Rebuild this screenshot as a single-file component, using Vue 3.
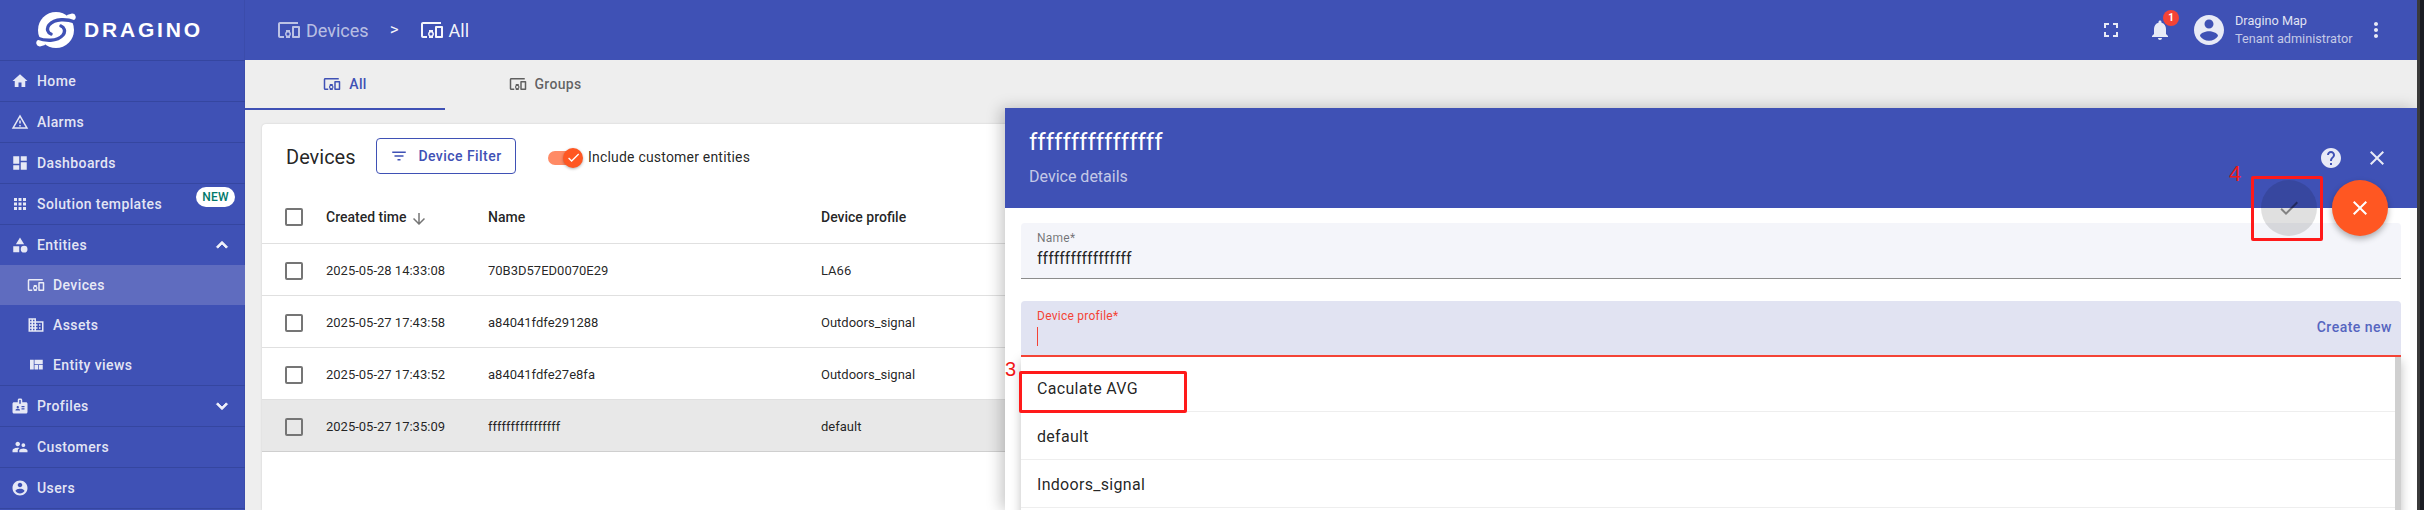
<script setup>
const I = {
  home: 'M10 20v-6h4v6h5v-8h3L12 3 2 12h3v8z',
  warn: 'M12 5.99L19.53 19H4.47L12 5.99M12 2L1 21h22L12 2zm1 14h-2v2h2v-2zm0-6h-2v4h2v-4z',
  dash: 'M3 13h8V3H3v10zm0 8h8v-6H3v6zm10 0h8V11h-8v10zm0-18v6h8V3h-8z',
  apps: 'M4 8h4V4H4v4zm6 12h4v-4h-4v4zm-6 0h4v-4H4v4zm0-6h4v-4H4v4zm6 0h4v-4h-4v4zm6-10v4h4V4h-4zm-6 4h4V4h-4v4zm6 6h4v-4h-4v4zm0 6h4v-4h-4v4z',
  cat: 'M12 2l-5.5 9h11zM17.5 13a4.5 4.5 0 1 0 0 9 4.5 4.5 0 0 0 0-9zM3 13.5h8v8H3z',
  dev: 'M3 6h18V4H3c-1.1 0-2 .9-2 2v12c0 1.1.9 2 2 2h4v-2H3V6zm10 6H9v1.78c-.61.55-1 1.33-1 2.22s.39 1.67 1 2.22V20h4v-1.78c.61-.55 1-1.34 1-2.22s-.39-1.67-1-2.22V12zm-2 5.5c-.83 0-1.5-.67-1.5-1.5s.67-1.5 1.5-1.5 1.5.67 1.5 1.5-.67 1.5-1.5 1.5zM22 8h-6c-.5 0-1 .5-1 1v10c0 .5.5 1 1 1h6c.5 0 1-.5 1-1V9c0-.5-.5-1-1-1zm-1 10h-4v-8h4v8z',
  domain: 'M12 7V3H2v18h20V7H12zM6 19H4v-2h2v2zm0-4H4v-2h2v2zm0-4H4V9h2v2zm0-4H4V5h2v2zm4 12H8v-2h2v2zm0-4H8v-2h2v2zm0-4H8V9h2v2zm0-4H8V5h2v2zm10 12h-8v-2h2v-2h-2v-2h2v-2h-2V9h8v10zm-2-8h-2v2h2v-2zm0 4h-2v2h2v-2z',
  quilt: 'M10 18h5v-6h-5v6zm-6 0h5V5H4v13zm12 0h5v-6h-5v6zM10 5v6h11V5H10z',
  badge: 'M20 7h-5V4c0-1.1-.9-2-2-2h-2c-1.1 0-2 .9-2 2v3H4c-1.1 0-2 .9-2 2v11c0 1.1.9 2 2 2h16c1.1 0 2-.9 2-2V9c0-1.1-.9-2-2-2zM9 12c.83 0 1.5.67 1.5 1.5S9.83 15 9 15s-1.5-.67-1.5-1.5S8.17 12 9 12zm3 6H6v-.75c0-1 2-1.5 3-1.5s3 .5 3 1.5V18zm1-9h-2V4h2v5zm5 7.5h-4V15h4v1.5zm0-3h-4V12h4v1.5z',
  sup: 'M16.5 12c1.38 0 2.49-1.12 2.49-2.5S17.88 7 16.5 7C15.12 7 14 8.12 14 9.5s1.12 2.5 2.5 2.5zM9 11c1.66 0 2.99-1.34 2.99-3S10.66 5 9 5C7.34 5 6 6.34 6 8s1.34 3 3 3zm7.5 3c-1.83 0-5.5.92-5.5 2.75V19h11v-2.25c0-1.83-3.67-2.75-5.5-2.75zM9 13c-2.33 0-7 1.17-7 3.5V19h7v-2.25c0-.85.33-2.34 2.37-3.47C10.5 13.1 9.66 13 9 13z',
  acct: 'M12 2C6.48 2 2 6.48 2 12s4.48 10 10 10 10-4.48 10-10S17.52 2 12 2zm0 3c1.66 0 3 1.34 3 3s-1.34 3-3 3-3-1.34-3-3 1.34-3 3-3zm0 14.2c-2.5 0-4.71-1.28-6-3.22.03-1.99 4-3.08 6-3.08 1.99 0 5.97 1.09 6 3.08-1.29 1.94-3.5 3.22-6 3.22z',
  less: 'M12 8l-6 6 1.41 1.41L12 10.83l4.59 4.58L18 14z',
  more: 'M16.59 8.59L12 13.17 7.41 8.59 6 10l6 6 6-6z',
  filter: 'M10 18h4v-2h-4v2zM3 6v2h18V6H3zm3 7h12v-2H6v2z',
  full: 'M7 14H5v5h5v-2H7v-3zm-2-4h2V7h3V5H5v5zm12 7h-3v2h5v-5h-2v3zM14 5v2h3v3h2V5h-5z',
  bell: 'M12 22c1.1 0 2-.9 2-2h-4c0 1.1.89 2 2 2zm6-6v-5c0-3.07-1.64-5.64-4.5-6.32V4c0-.83-.67-1.5-1.5-1.5s-1.5.67-1.5 1.5v.68C7.63 5.36 6 7.92 6 11v5l-2 2v1h16v-1l-2-2z',
  vert: 'M12 8c1.1 0 2-.9 2-2s-.9-2-2-2-2 .9-2 2 .9 2 2 2zm0 2c-1.1 0-2 .9-2 2s.9 2 2 2 2-.9 2-2-.9-2-2-2zm0 6c-1.1 0-2 .9-2 2s.9 2 2 2 2-.9 2-2-.9-2-2-2z',
  help: 'M12 2C6.48 2 2 6.48 2 12s4.48 10 10 10 10-4.48 10-10S17.52 2 12 2zm1 17h-2v-2h2v2zm2.07-7.75l-.9.92C13.45 12.9 13 13.5 13 15h-2v-.5c0-1.1.45-2.1 1.17-2.83l1.24-1.26c.37-.36.59-.86.59-1.41 0-1.1-.9-2-2-2s-2 .9-2 2H8c0-2.21 1.79-4 4-4s4 1.79 4 4c0 .88-.36 1.68-.93 2.25z',
  close: 'M19 6.41L17.59 5 12 10.59 6.41 5 5 6.41 10.59 12 5 17.59 6.41 19 12 13.41 17.59 19 19 17.59 13.41 12z',
  check: 'M9 16.17L4.83 12l-1.42 1.41L9 19 21 7l-1.41-1.41z',
  down: 'M20 12l-1.41-1.41L13 16.17V4h-2v12.17l-5.58-5.59L4 12l8 8 8-8z'
}
const nav = [
  { label: 'Home', icon: I.home },
  { label: 'Alarms', icon: I.warn },
  { label: 'Dashboards', icon: I.dash },
  { label: 'Solution templates', icon: I.apps, tag: 'NEW' },
  { label: 'Entities', icon: I.cat, chev: I.less, open: true },
  { label: 'Devices', icon: I.dev, sub: true, active: true },
  { label: 'Assets', icon: I.domain, sub: true },
  { label: 'Entity views', icon: I.quilt, sub: true, last: true },
  { label: 'Profiles', icon: I.badge, chev: I.more },
  { label: 'Customers', icon: I.sup },
  { label: 'Users', icon: I.acct }
]
const rows = [
  { t: '2025-05-28 14:33:08', n: '70B3D57ED0070E29', p: 'LA66' },
  { t: '2025-05-27 17:43:58', n: 'a84041fdfe291288', p: 'Outdoors_signal' },
  { t: '2025-05-27 17:43:52', n: 'a84041fdfe27e8fa', p: 'Outdoors_signal' },
  { t: '2025-05-27 17:35:09', n: 'ffffffffffffffff', p: 'default', sel: true }
]
const options = ['Caculate AVG', 'default', 'Indoors_signal']
</script>

<template>
  <div class="screen">
    <div class="app">
      <aside class="side">
        <div class="logo">
          <svg class="mark" viewBox="0 0 42 36">
            <circle cx="21" cy="18" r="18" fill="#fff" />
            <path d="M32 3L37 1.500A3.500 3.500 0 0 1 39 8L33 10z" fill="#fff" />
            <path d="M10 33L5 34.500A3.500 3.500 0 0 1 3 28L9 26z" fill="#fff" />
            <path d="M40 10C32 7 20 6 14 13C11 17 13 21 16 22" fill="none" stroke="#3f51b5" stroke-width="3.400" stroke-linecap="round" />
            <path d="M2 26C10 29 22 30 28 23C31 19 29 15 26 14" fill="none" stroke="#3f51b5" stroke-width="3.400" stroke-linecap="round" />
          </svg>
          <span class="word">DRAGINO</span>
        </div>
        <div
          v-for="n in nav"
          :key="n.label"
          class="nav"
          :class="{ sub: n.sub, active: n.active, open: n.open, last: n.last }"
        >
          <svg class="nav-ic" viewBox="0 0 24 24"><path :d="n.icon" /></svg>
          <span class="nav-t">{{ n.label }}</span>
          <span v-if="n.tag" class="tag">{{ n.tag }}</span>
          <svg v-if="n.chev" class="chev" viewBox="0 0 24 24"><path :d="n.chev" /></svg>
        </div>
      </aside>

      <div class="right">
        <header class="top">
          <div class="crumbs">
            <svg class="crumb-ic dim" viewBox="0 0 24 24"><path :d="I.dev" /></svg>
            <span class="dim">Devices</span>
            <span class="sep">&gt;</span>
            <svg class="crumb-ic" viewBox="0 0 24 24"><path :d="I.dev" /></svg>
            <span>All</span>
          </div>
          <div class="tools">
            <svg class="tool-full" viewBox="0 0 24 24"><path :d="I.full" /></svg>
            <div class="bell">
              <svg viewBox="0 0 24 24"><path :d="I.bell" /></svg>
              <span class="count">1</span>
            </div>
            <svg class="avatar" viewBox="2 2 20 20"><path :d="I.acct" /></svg>
            <div class="user">
              <div>Dragino Map</div>
              <div class="role">Tenant administrator</div>
            </div>
            <svg class="vert" viewBox="0 0 24 24"><path :d="I.vert" /></svg>
          </div>
        </header>

        <nav class="tabs">
          <div class="tab on">
            <svg viewBox="0 0 24 24"><path :d="I.dev" /></svg>
            <span>All</span>
          </div>
          <div class="tab">
            <svg viewBox="0 0 24 24"><path :d="I.dev" /></svg>
            <span>Groups</span>
          </div>
        </nav>

        <section class="card">
          <div class="bar">
            <h1>Devices</h1>
            <button class="filter">
              <svg viewBox="0 0 24 24"><path :d="I.filter" /></svg>
              <span>Device Filter</span>
            </button>
            <div class="toggle">
              <span class="thumb">
                <svg viewBox="0 0 24 24"><path :d="I.check" /></svg>
              </span>
            </div>
            <span class="inc">Include customer entities</span>
          </div>
          <div class="tr head">
            <span class="box"></span>
            <span class="created">Created time
              <svg viewBox="0 0 24 24"><path :d="I.down" /></svg>
            </span>
            <span>Name</span>
            <span>Device profile</span>
          </div>
          <div v-for="r in rows" :key="r.t" class="tr" :class="{ sel: r.sel }">
            <span class="box"></span>
            <span>{{ r.t }}</span>
            <span>{{ r.n }}</span>
            <span>{{ r.p }}</span>
          </div>
        </section>
      </div>

      <div class="panel">
        <div class="p-head">
          <div class="p-title">ffffffffffffffff</div>
          <div class="p-sub">Device details</div>
          <div class="p-actions">
            <svg viewBox="0 0 24 24"><path :d="I.help" /></svg>
            <svg viewBox="0 0 24 24"><path :d="I.close" /></svg>
          </div>
        </div>
        <div class="p-body">
          <div class="field">
            <label>Name*</label>
            <div class="val">fffffffffffffffff</div>
          </div>
          <div class="field focus">
            <label>Device profile*</label>
            <div class="val"><i class="caret"></i></div>
            <span class="create">Create new</span>
          </div>
          <div class="drop">
            <div v-for="o in options" :key="o" class="opt">{{ o }}</div>
            <div class="opt"></div>
          </div>
        </div>
        <button class="fab save">
          <svg viewBox="0 0 24 24"><path :d="I.check" /></svg>
        </button>
        <button class="fab cancel">
          <svg viewBox="0 0 24 24"><path :d="I.close" /></svg>
        </button>
      </div>

      <span class="note n3">3</span>
      <span class="mark-box b3"></span>
      <span class="note n4">4</span>
      <span class="mark-box b4"></span>
    </div>
    <div class="edge"></div>
  </div>
</template>

<style scoped>
.screen {
  display: flex;
  width: 2424px;
  height: 510px;
  overflow: hidden;
  font-family: Roboto, "Liberation Sans", sans-serif;
  color: rgba(0, 0, 0, 0.87);
}
.edge {
  width: 7px;
  flex: none;
  background: linear-gradient(90deg, #3a3a3a 0 3px, #1a1c22 3px);
}
.app {
  position: relative;
  flex: 1;
  display: flex;
  overflow: hidden;
  background: #eeeeee;
}
svg {
  display: block;
  fill: currentColor;
  flex: none;
}

/* sidebar */
.side {
  width: 245px;
  flex: none;
  background: #3f51b5;
  color: rgba(255, 255, 255, 0.87);
  box-shadow: inset -1px 0 0 rgba(0, 0, 0, 0.05);
}
.logo {
  height: 60px;
  border-bottom: 1px solid #3546a0;
  display: flex;
  align-items: center;
  padding-left: 35px;
  gap: 7px;
}
.mark {
  width: 42px;
  height: 36px;
}
.word {
  font-family: "Liberation Sans", sans-serif;
  font-weight: 700;
  font-size: 21px;
  letter-spacing: 2.800px;
  color: #fff;
}
.nav {
  height: 40px;
  border-bottom: 1px solid #3546a0;
  display: flex;
  align-items: center;
  padding-left: 11px;
  font-size: 14px;
  font-weight: 500;
  letter-spacing: 0.4px;
  position: relative;
  color: rgba(255, 255, 255, 0.87);
}
.nav-ic {
  width: 18px;
  height: 18px;
  margin-right: 8px;
}
.nav-t {
  margin-top: -1px;
}
.nav.sub,
.nav.open {
  border-bottom: 0;
}
.nav.sub {
  padding-left: 27px;
}
.nav.last {
  border-bottom: 1px solid #3546a0;
}
.nav.active {
  background: #5f6cbf;
}
.tag {
  position: absolute;
  left: 196px;
  top: 3px;
  width: 39px;
  height: 20px;
  border-radius: 10px;
  background: #fff;
  color: #00796b;
  font-size: 12px;
  line-height: 20px;
  text-align: center;
  letter-spacing: 0.2px;
}
.chev {
  width: 22px;
  height: 22px;
  position: absolute;
  left: 211px;
  top: 9px;
  color: #f0f1fa;
  stroke: currentColor;
  stroke-width: 1;
}

/* right column */
.right {
  flex: 1;
  min-width: 0;
  display: flex;
  flex-direction: column;
}
.top {
  height: 60px;
  flex: none;
  background: #3f51b5;
  color: #fff;
  display: flex;
  align-items: center;
  justify-content: space-between;
  padding-left: 32px;
}
.crumbs {
  display: flex;
  align-items: center;
  font-size: 18px;
  color: rgba(255, 255, 255, 0.95);
}
.crumb-ic {
  width: 24px;
  height: 24px;
  margin-right: 5px;
}
.dim {
  color: rgba(255, 255, 255, 0.65);
}
.sep {
  width: 51px;
  text-align: center;
  margin-bottom: 3px;
  font-size: 17px;
}
.tools {
  display: flex;
  align-items: center;
  color: #e8eaf6;
}
.tool-full {
  width: 24px;
  height: 24px;
  margin-right: 25px;
}
.bell {
  position: relative;
  width: 24px;
  height: 24px;
  margin-right: 22px;
}
.bell svg {
  width: 24px;
  height: 24px;
}
.count {
  position: absolute;
  left: 15px;
  top: -8px;
  width: 16px;
  height: 16px;
  border-radius: 50%;
  background: #f44336;
  color: #fff;
  font-size: 10px;
  font-weight: 700;
  line-height: 16px;
  text-align: center;
}
.avatar {
  width: 30px;
  height: 30px;
  margin-right: 11px;
}
.user {
  font-size: 12.700px;
  line-height: 18px;
  color: rgba(255, 255, 255, 0.85);
  width: 129px;
}
.role {
  color: rgba(255, 255, 255, 0.7);
}
.vert {
  width: 24px;
  height: 24px;
  margin-right: 29px;
}

/* tabs */
.tabs {
  display: flex;
  height: 48px;
  flex: none;
}
.tab {
  width: 200px;
  height: 48px;
  display: flex;
  align-items: center;
  justify-content: center;
  gap: 8px;
  font-size: 14px;
  font-weight: 500;
  letter-spacing: 0.3px;
  color: rgba(0, 0, 0, 0.6);
}
.tab svg {
  width: 18px;
  height: 18px;
}
.tab.on {
  color: #3f51b5;
  border-bottom: 2px solid #3f51b5;
}

/* card */
.card {
  flex: 1;
  margin: 16px 16px 0 17px;
  background: #fff;
  border-radius: 4px 4px 0 0;
  box-shadow: 0 0 2px rgba(0, 0, 0, 0.15);
  font-size: 13px;
}
.bar {
  height: 65px;
  display: flex;
  align-items: center;
  padding-left: 24px;
}
.bar h1 {
  margin: 0;
  font-size: 20px;
  font-weight: 400;
  width: 90px;
}
.filter {
  width: 140px;
  height: 36px;
  margin-top: -2px;
  display: flex;
  align-items: center;
  justify-content: center;
  gap: 10px;
  background: #fff;
  border: 1px solid #3f51b5;
  border-radius: 4px;
  color: #3f51b5;
  font: 500 14px Roboto, sans-serif;
  letter-spacing: 0.45px;
  padding: 0;
}
.filter svg {
  width: 18px;
  height: 18px;
}
.toggle {
  position: relative;
  width: 34px;
  height: 14px;
  margin: 2px 6px 0 32px;
  border-radius: 7px;
  background: #ff8a65;
}
.thumb {
  position: absolute;
  right: -1px;
  top: -3px;
  width: 20px;
  height: 20px;
  border-radius: 50%;
  background: #ff5722;
  color: #fff;
  box-shadow: 0 1px 3px rgba(0, 0, 0, 0.3);
  display: flex;
  align-items: center;
  justify-content: center;
}
.thumb svg {
  width: 15px;
  height: 15px;
}
.inc {
  font-size: 14px;
  letter-spacing: 0.2px;
}
.tr {
  height: 52px;
  box-sizing: border-box;
  padding-top: 2px;
  display: grid;
  grid-template-columns: 64px 162px 333px 1fr;
  align-items: center;
  border-bottom: 1px solid #e0e0e0;
}
.tr.head {
  height: 55px;
  font-weight: 500;
  font-size: 14px;
}
.tr.sel {
  background: #e8e8e8;
  border-bottom-color: #cfcfcf;
}
.box {
  width: 18px;
  height: 18px;
  box-sizing: border-box;
  margin-left: 23px;
  border: 2px solid #757575;
  border-radius: 2px;
}
.created {
  display: flex;
  align-items: center;
  gap: 4px;
}
.created svg {
  width: 18px;
  height: 18px;
  color: #757575;
  margin-top: 3px;
}

/* side panel */
.panel {
  position: absolute;
  left: 1005px;
  right: 0;
  top: 108px;
  bottom: 0;
  background: #fff;
  box-shadow: -4px 0 14px rgba(0, 0, 0, 0.22);
}
.p-head {
  position: relative;
  height: 100px;
  box-sizing: border-box;
  padding: 18px 24px;
  background: #3f51b5;
  color: #fff;
}
.p-title {
  font-size: 24px;
  line-height: 32px;
}
.p-sub {
  margin-top: 9px;
  font-size: 16px;
  line-height: 20px;
  color: rgba(255, 255, 255, 0.7);
}
.p-actions {
  position: absolute;
  right: 28px;
  top: 38px;
  display: flex;
  gap: 22px;
  color: #e8eaf6;
}
.p-actions svg {
  width: 24px;
  height: 24px;
}
.p-body {
  position: relative;
  padding: 15px 16px 0;
}
.field {
  position: relative;
  height: 56px;
  box-sizing: border-box;
  margin-bottom: 22px;
  padding: 8px 16px 0;
  background: #f4f5fa;
  border-radius: 4px 4px 0 0;
  border-bottom: 1px solid #8c8c8c;
}
.field label {
  display: block;
  font-size: 12px;
  line-height: 15px;
  letter-spacing: 0.25px;
  color: rgba(0, 0, 0, 0.54);
}
.val {
  margin-top: 1px;
  height: 24px;
  font-size: 16px;
  line-height: 24px;
  color: rgba(0, 0, 0, 0.87);
}
.field.focus {
  margin-bottom: 0;
  background: #e1e3f2;
  border-bottom: 2px solid #f44336;
}
.field.focus label {
  color: #f44336;
}
.caret {
  display: block;
  width: 1px;
  height: 19px;
  margin-top: 3px;
  background: #f44336;
}
.create {
  position: absolute;
  right: 9px;
  top: 18px;
  font-size: 14px;
  font-weight: 500;
  letter-spacing: 0.5px;
  color: #5565c0;
}
.drop {
  padding-top: 7px;
  background: #fff;
  box-shadow: 0 4px 10px rgba(0, 0, 0, 0.25);
  border-right: 6px solid #d0d0d0;
}
.opt {
  height: 48px;
  box-sizing: border-box;
  padding: 1px 0 0 16px;
  font-size: 16px;
  line-height: 47px;
  letter-spacing: 0.3px;
  border-bottom: 1px solid #eeeeee;
}
.fab {
  position: absolute;
  top: 72px;
  width: 56px;
  height: 56px;
  padding: 0;
  border: 0;
  border-radius: 50%;
  display: flex;
  align-items: center;
  justify-content: center;
}
.fab svg {
  width: 24px;
  height: 24px;
}
.save {
  left: 1256px;
  background: rgba(0, 0, 0, 0.12);
  color: rgba(0, 0, 0, 0.42);
}
.cancel {
  left: 1327px;
  background: #ff5722;
  color: #fff;
  box-shadow: 0 3px 6px rgba(0, 0, 0, 0.3);
}

/* red annotations */
.mark-box {
  position: absolute;
  box-sizing: border-box;
  border: 3px solid #ff1a1a;
  border-radius: 2px;
}
.b3 {
  left: 1019px;
  top: 371px;
  width: 168px;
  height: 42px;
}
.b4 {
  left: 2251px;
  top: 176px;
  width: 72px;
  height: 65px;
}
.note {
  position: absolute;
  font-family: "Liberation Sans", sans-serif;
  color: #f01818;
  line-height: 1;
}
.n3 {
  left: 1005px;
  top: 359px;
  font-size: 20px;
}
.n4 {
  left: 2229px;
  top: 163px;
  font-size: 22px;
}
</style>
